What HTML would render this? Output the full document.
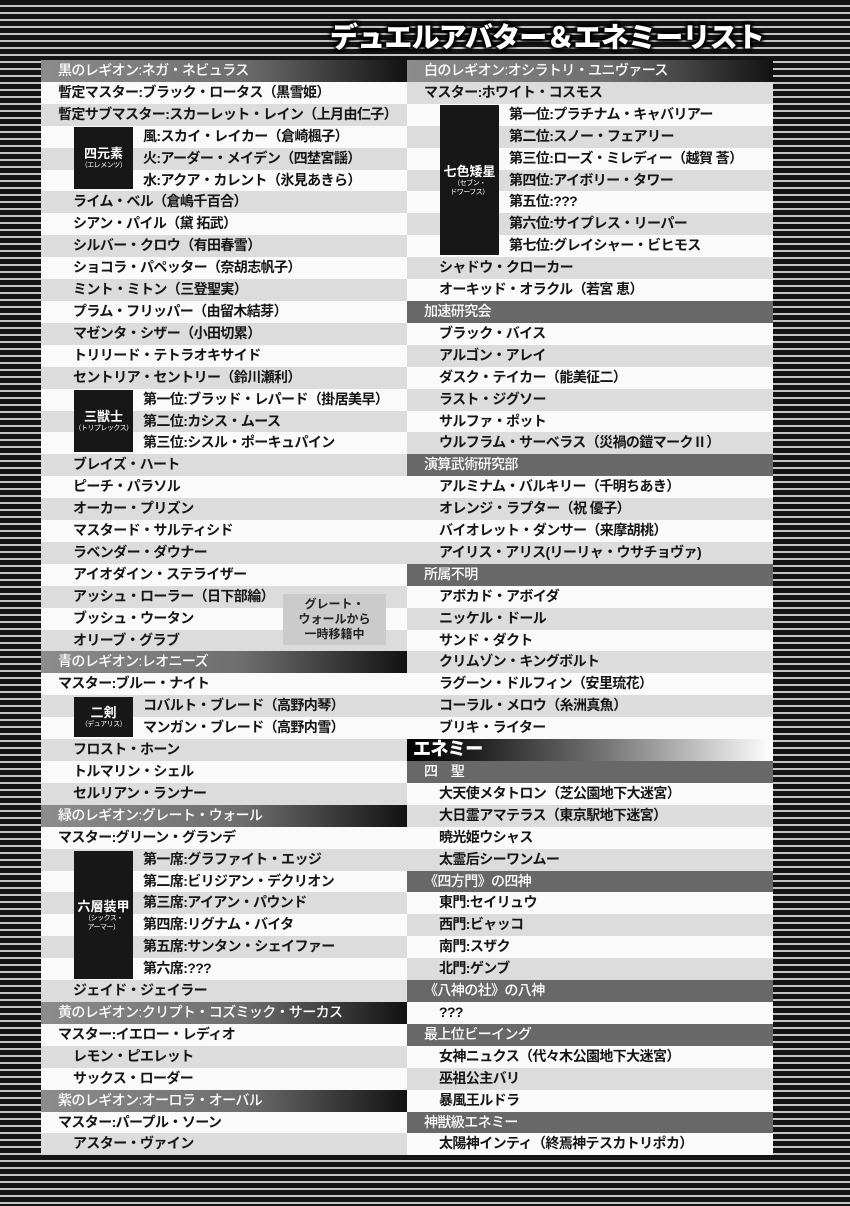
<!DOCTYPE html>
<html><head><meta charset="utf-8"><style>
*{margin:0;padding:0;box-sizing:border-box}
body{width:850px;height:1206px;overflow:hidden;background:repeating-linear-gradient(to bottom,#141414 0,#141414 5px,#c4c4c4 5px,#c4c4c4 7px);font-family:"Liberation Sans","Noto Sans CJK JP",sans-serif;position:relative}
.title{position:absolute;left:330px;top:19px;width:450px;height:38px;color:#fff;font-size:28px;font-weight:900;letter-spacing:-0.8px;white-space:nowrap;text-shadow:0 0 3px #000,0 0 4px #000,2px 2px 3px #000,-2px -2px 3px #000,2px -2px 3px #000,-2px 2px 3px #000;line-height:38px}
.col{position:absolute;top:60px;width:366px;height:1096px}
.L{left:41px}.R{left:407px}
.r{height:21.92px;line-height:21.92px;font-size:14px;font-weight:700;color:#151515;white-space:nowrap;letter-spacing:-0.6px;overflow:hidden}
.w{background:#fafafa}.g{background:#dcdcdc}
.h{background:linear-gradient(to right,#8c8c8c 0%,#6e6e6e 55%,#121212 100%);color:#fff;padding-left:17px;font-weight:500}
.s{background:#686868;color:#fff;padding-left:17px;font-weight:500}
.e{background:linear-gradient(to right,#000 0%,#222 20%,#777 55%,#fff 100%);color:#fff;padding-left:6px;font-size:18px;font-weight:900}
.m{padding-left:17px}.i{padding-left:32px}.b{padding-left:102px}
.box{position:absolute;left:33px;width:59px;background:#171717;color:#fff;text-align:center;display:flex;flex-direction:column;justify-content:center;font-weight:700;font-size:13px;line-height:15px}
.box small{font-size:7px;line-height:9px;font-weight:400;letter-spacing:-0.5px;white-space:nowrap}
.gw{position:absolute;left:242px;width:103px;background:#cbcbcb;color:#222;text-align:center;font-size:12px;font-weight:700;line-height:15px;display:flex;flex-direction:column;justify-content:center}
</style></head><body>
<div class="title">デュエルアバター＆エネミーリスト</div>

<div class="col L">
<div class="r h">黒のレギオン:ネガ・ネビュラス</div>
<div class="r w m">暫定マスター:ブラック・ロータス（黒雪姫）</div>
<div class="r g m">暫定サブマスター:スカーレット・レイン（上月由仁子）</div>
<div class="r w b">風:スカイ・レイカー（倉崎楓子）</div>
<div class="r g b">火:アーダー・メイデン（四埜宮謡）</div>
<div class="r w b">水:アクア・カレント（氷見あきら）</div>
<div class="r g i">ライム・ベル（倉嶋千百合）</div>
<div class="r w i">シアン・パイル（黛 拓武）</div>
<div class="r g i">シルバー・クロウ（有田春雪）</div>
<div class="r w i">ショコラ・パペッター（奈胡志帆子）</div>
<div class="r g i">ミント・ミトン（三登聖実）</div>
<div class="r w i">プラム・フリッパー（由留木結芽）</div>
<div class="r g i">マゼンタ・シザー（小田切累）</div>
<div class="r w i">トリリード・テトラオキサイド</div>
<div class="r g i">セントリア・セントリー（鈴川瀬利）</div>
<div class="r w b">第一位:ブラッド・レパード（掛居美早）</div>
<div class="r g b">第二位:カシス・ムース</div>
<div class="r w b">第三位:シスル・ポーキュパイン</div>
<div class="r g i">ブレイズ・ハート</div>
<div class="r w i">ピーチ・パラソル</div>
<div class="r g i">オーカー・プリズン</div>
<div class="r w i">マスタード・サルティシド</div>
<div class="r g i">ラベンダー・ダウナー</div>
<div class="r w i">アイオダイン・ステライザー</div>
<div class="r g i">アッシュ・ローラー（日下部綸）</div>
<div class="r w i">ブッシュ・ウータン</div>
<div class="r g i">オリーブ・グラブ</div>
<div class="r h">青のレギオン:レオニーズ</div>
<div class="r w m">マスター:ブルー・ナイト</div>
<div class="r g b">コバルト・ブレード（高野内琴）</div>
<div class="r w b">マンガン・ブレード（高野内雪）</div>
<div class="r g i">フロスト・ホーン</div>
<div class="r w i">トルマリン・シェル</div>
<div class="r g i">セルリアン・ランナー</div>
<div class="r h">緑のレギオン:グレート・ウォール</div>
<div class="r w m">マスター:グリーン・グランデ</div>
<div class="r g b">第一席:グラファイト・エッジ</div>
<div class="r w b">第二席:ビリジアン・デクリオン</div>
<div class="r g b">第三席:アイアン・パウンド</div>
<div class="r w b">第四席:リグナム・バイタ</div>
<div class="r g b">第五席:サンタン・シェイファー</div>
<div class="r w b">第六席:???</div>
<div class="r g i">ジェイド・ジェイラー</div>
<div class="r h">黄のレギオン:クリプト・コズミック・サーカス</div>
<div class="r w m">マスター:イエロー・レディオ</div>
<div class="r g i">レモン・ピエレット</div>
<div class="r w i">サックス・ローダー</div>
<div class="r h">紫のレギオン:オーロラ・オーバル</div>
<div class="r w m">マスター:パープル・ソーン</div>
<div class="r g i">アスター・ヴァイン</div>

<div class="box" style="top:67px;height:62px">四元素<small>（エレメンツ）</small></div>
<div class="box" style="top:330px;height:62px">三獣士<small>（トリプレックス）</small></div>
<div class="box" style="top:637px;height:40px">二剣<small>（デュアリス）</small></div>
<div class="box" style="top:791px;height:128px">六層装甲<small>（シックス・<br>アーマー）</small></div>
<div class="gw" style="top:534px;height:51px">グレート・<br>ウォールから<br>一時移籍中</div>
</div>

<div class="col R">
<div class="r h">白のレギオン:オシラトリ・ユニヴァース</div>
<div class="r g m">マスター:ホワイト・コスモス</div>
<div class="r w b">第一位:プラチナム・キャバリアー</div>
<div class="r g b">第二位:スノー・フェアリー</div>
<div class="r w b">第三位:ローズ・ミレディー（越賀 莟）</div>
<div class="r g b">第四位:アイボリー・タワー</div>
<div class="r w b">第五位:???</div>
<div class="r g b">第六位:サイプレス・リーパー</div>
<div class="r w b">第七位:グレイシャー・ビヒモス</div>
<div class="r g i">シャドウ・クローカー</div>
<div class="r w i">オーキッド・オラクル（若宮 恵）</div>
<div class="r s">加速研究会</div>
<div class="r w i">ブラック・バイス</div>
<div class="r g i">アルゴン・アレイ</div>
<div class="r w i">ダスク・テイカー（能美征二）</div>
<div class="r g i">ラスト・ジグソー</div>
<div class="r w i">サルファ・ポット</div>
<div class="r g i">ウルフラム・サーベラス（災禍の鎧マークⅡ）</div>
<div class="r s">演算武術研究部</div>
<div class="r w i">アルミナム・バルキリー（千明ちあき）</div>
<div class="r g i">オレンジ・ラプター（祝 優子）</div>
<div class="r w i">バイオレット・ダンサー（来摩胡桃）</div>
<div class="r g i">アイリス・アリス(リーリャ・ウサチョヴァ)</div>
<div class="r s">所属不明</div>
<div class="r w i">アボカド・アボイダ</div>
<div class="r g i">ニッケル・ドール</div>
<div class="r w i">サンド・ダクト</div>
<div class="r g i">クリムゾン・キングボルト</div>
<div class="r w i">ラグーン・ドルフィン（安里琉花）</div>
<div class="r g i">コーラル・メロウ（糸洲真魚）</div>
<div class="r w i">ブリキ・ライター</div>
<div class="r e">エネミー</div>
<div class="r s">四　聖</div>
<div class="r w i">大天使メタトロン（芝公園地下大迷宮）</div>
<div class="r g i">大日霊アマテラス（東京駅地下迷宮）</div>
<div class="r w i">暁光姫ウシャス</div>
<div class="r g i">太霊后シーワンムー</div>
<div class="r s">《四方門》の四神</div>
<div class="r w i">東門:セイリュウ</div>
<div class="r g i">西門:ビャッコ</div>
<div class="r w i">南門:スザク</div>
<div class="r g i">北門:ゲンブ</div>
<div class="r s">《八神の社》の八神</div>
<div class="r w i">???</div>
<div class="r s">最上位ビーイング</div>
<div class="r w i">女神ニュクス（代々木公園地下大迷宮）</div>
<div class="r g i">巫祖公主バリ</div>
<div class="r w i">暴風王ルドラ</div>
<div class="r s">神獣級エネミー</div>
<div class="r w i">太陽神インティ（終焉神テスカトリポカ）</div>

<div class="box" style="top:45px;height:150px">七色矮星<small>（セブン・<br>ドワーフス）</small></div>
</div>
</body></html>
